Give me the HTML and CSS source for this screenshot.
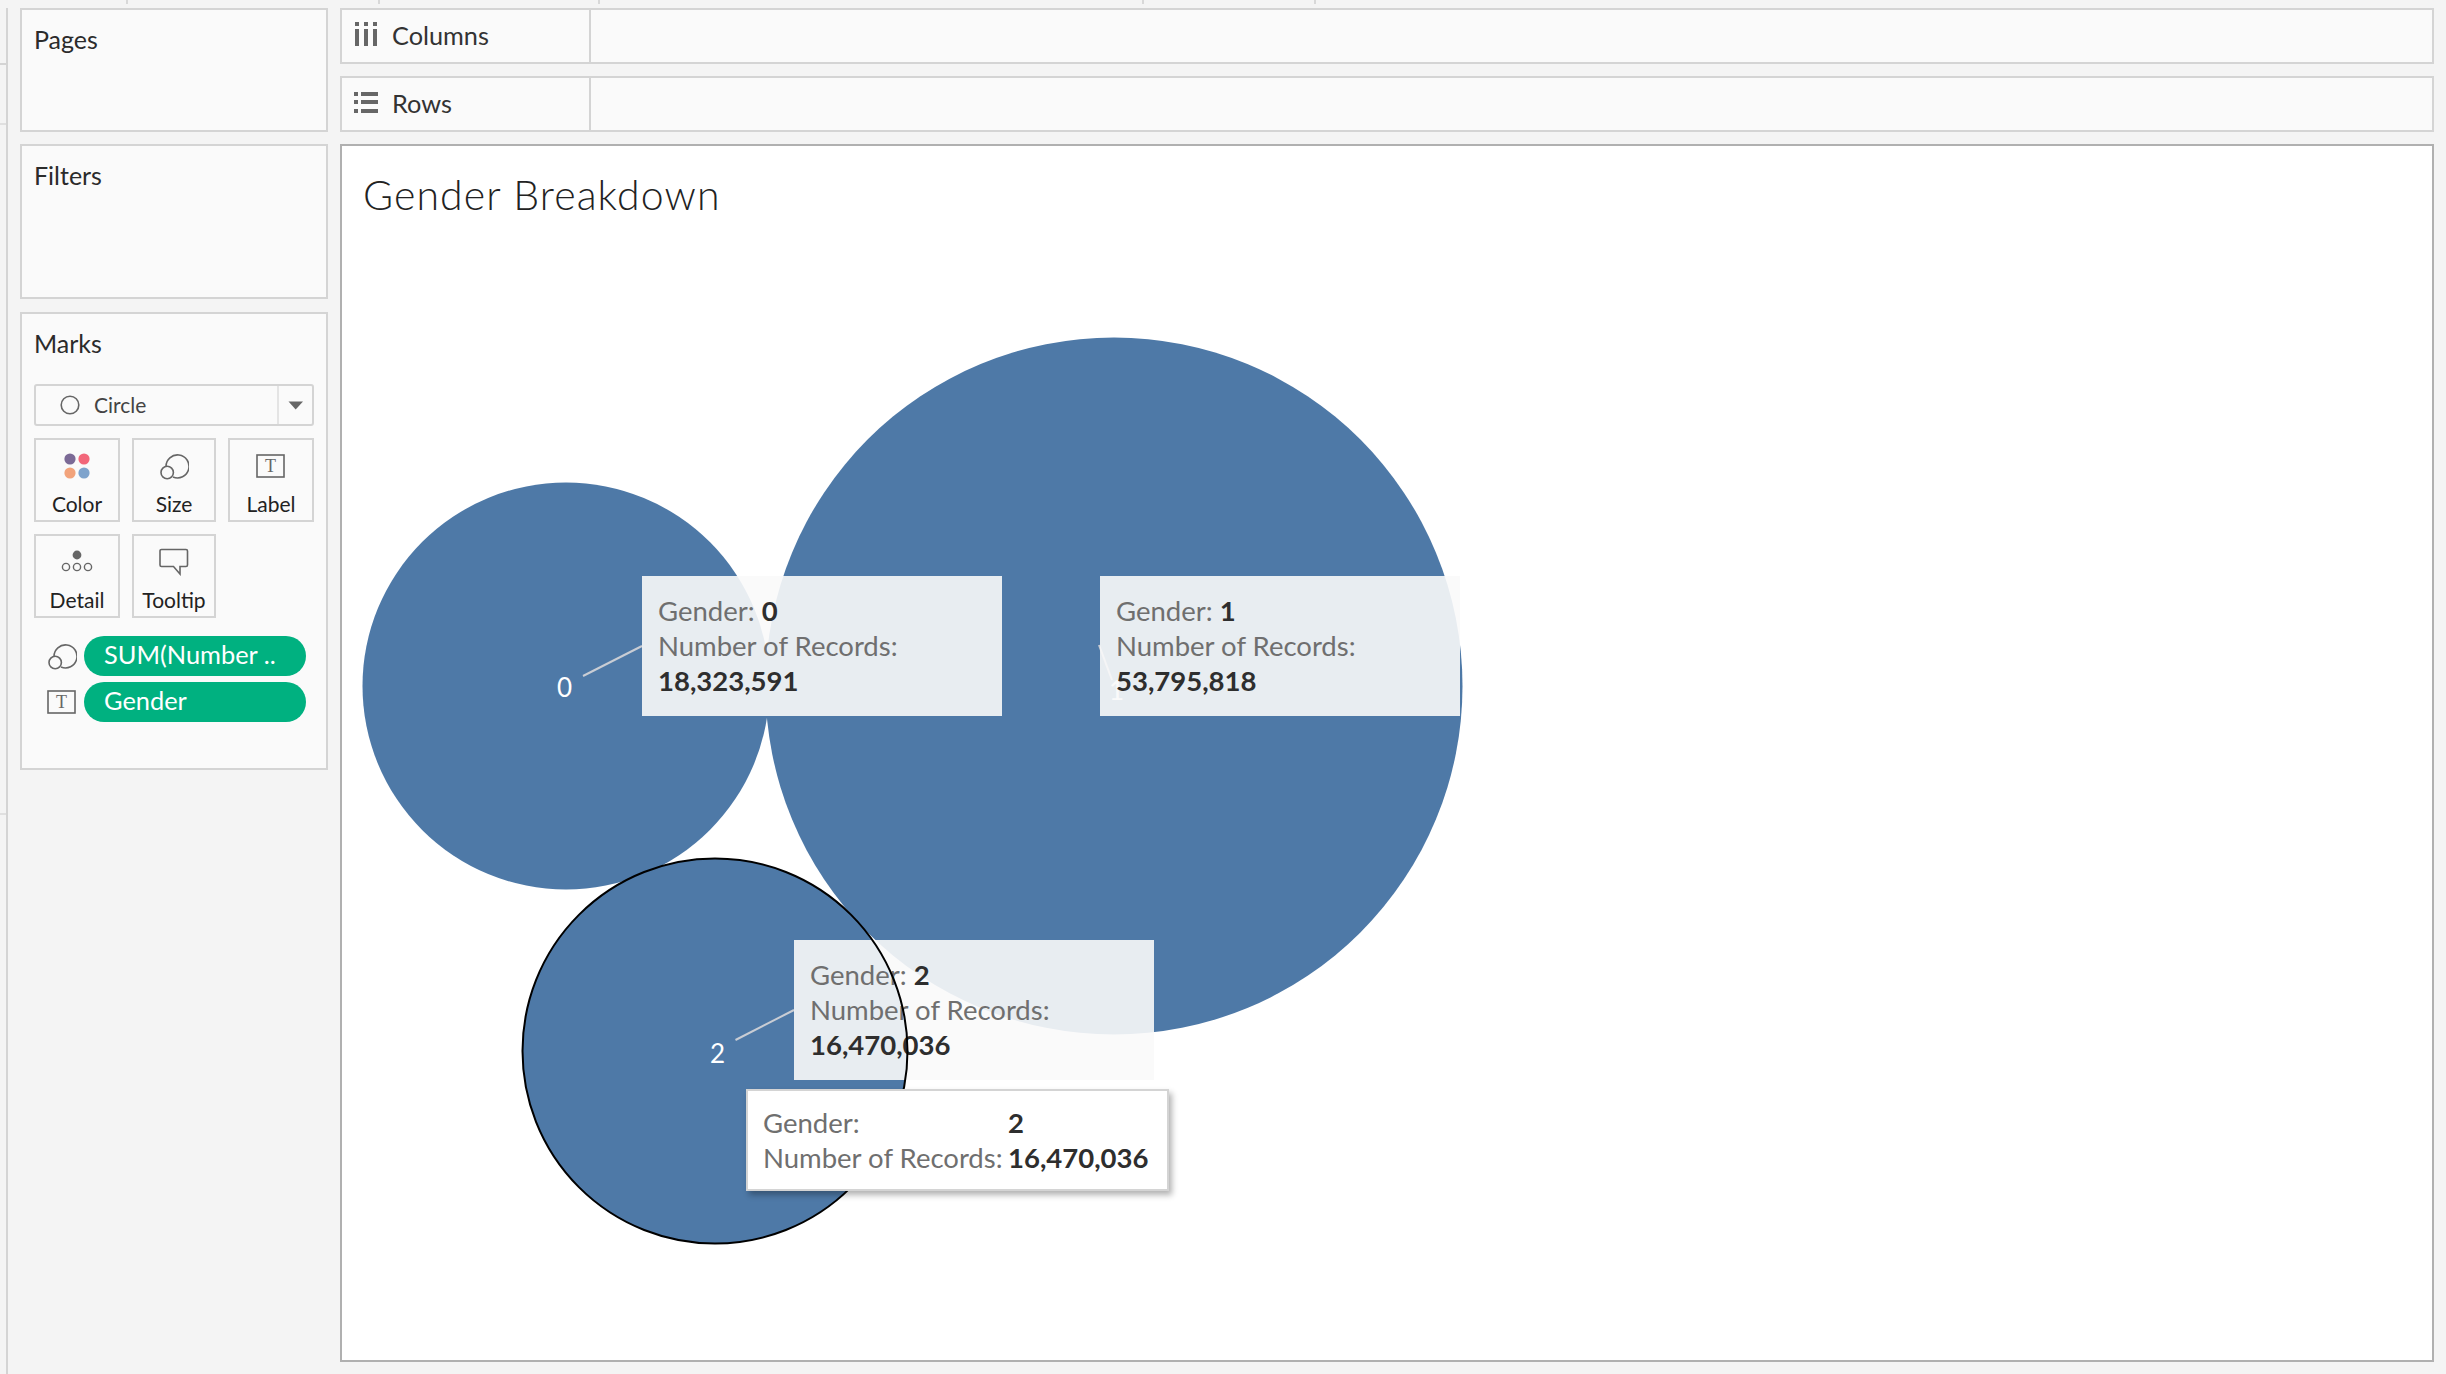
FILE: index.html
```html
<!DOCTYPE html>
<html lang="en">
<head>
<meta charset="utf-8">
<title>Gender Breakdown</title>
<link rel="stylesheet" href="styles.css">
</head>
<body>
<div class="ticks">
  <span class="tick t1"></span><span class="tick t2"></span><span class="tick t3"></span><span class="tick t4"></span><span class="tick t5"></span>
</div>
<div class="app">
  <div class="rail"><div class="rail-cell c1"></div><div class="rail-cell c2"></div><div class="rail-cell c3"></div></div>
  <aside class="sidebar">
    <section class="panel pages"><h2 class="panel-title">Pages</h2></section>
    <section class="panel filters"><h2 class="panel-title">Filters</h2></section>
    <section class="panel marks">
      <h2 class="panel-title">Marks</h2>
      <div class="select">
        <span class="select-main">
          <svg class="select-icon" width="20" height="20" viewBox="0 0 20 20"><circle cx="10" cy="10" r="8.8" fill="none" stroke="#666" stroke-width="1.6"/></svg>
          <span class="select-text">Circle</span>
        </span>
        <span class="select-arrow"><svg width="16" height="9" viewBox="0 0 16 9"><path d="M0.5 0.5H15L7.7 8.5Z" fill="#666"/></svg></span>
      </div>
      <div class="cards">
        <div class="card w1">
          <svg width="28" height="28" viewBox="0 0 28 28"><circle cx="7" cy="7" r="5.6" fill="#7b6a96"/><circle cx="21" cy="7" r="5.6" fill="#f2677a"/><circle cx="7" cy="21" r="5.6" fill="#f2a37b"/><circle cx="21" cy="21" r="5.6" fill="#7ea3cc"/></svg>
          <span>Color</span>
        </div>
        <div class="card w2">
          <svg width="30" height="28" viewBox="0 0 30 28"><path d="M7 14.5A11.5 11.5 0 1 1 14 25" fill="none" stroke="#666" stroke-width="1.6"/><circle cx="8.2" cy="20.5" r="6.2" fill="none" stroke="#666" stroke-width="1.6"/></svg>
          <span>Size</span>
        </div>
        <div class="card w3">
          <svg width="30" height="26" viewBox="0 0 30 26"><rect x="1" y="2" width="27" height="22" fill="none" stroke="#666" stroke-width="1.6"/><text x="14.5" y="19" class="icon-t">T</text></svg>
          <span>Label</span>
        </div>
        <div class="card w1">
          <svg width="32" height="24" viewBox="0 0 32 24"><circle cx="16" cy="5" r="4.4" fill="#666"/><circle cx="5" cy="17" r="3.6" fill="none" stroke="#666" stroke-width="1.4"/><circle cx="16" cy="17" r="3.6" fill="none" stroke="#666" stroke-width="1.4"/><circle cx="27" cy="17" r="3.6" fill="none" stroke="#666" stroke-width="1.4"/></svg>
          <span>Detail</span>
        </div>
        <div class="card w2">
          <svg width="30" height="28" viewBox="0 0 30 28"><path d="M2.5 1.5H27A1.5 1.5 0 0 1 28.5 3V17A1.5 1.5 0 0 1 27 18.5H21V26L14.5 18.5H2.5A1.5 1.5 0 0 1 1 17V3A1.5 1.5 0 0 1 2.5 1.5Z" fill="none" stroke="#666" stroke-width="1.6"/></svg>
          <span>Tooltip</span>
        </div>
      </div>
      <div class="pill-row">
        <svg class="pill-icon" width="30" height="28" viewBox="0 0 30 28"><path d="M7 14.5A11.5 11.5 0 1 1 14 25" fill="none" stroke="#666" stroke-width="1.6"/><circle cx="8.2" cy="20.5" r="6.2" fill="none" stroke="#666" stroke-width="1.6"/></svg>
        <span class="pill">SUM(Number ..</span>
      </div>
      <div class="pill-row">
        <svg class="pill-icon" width="30" height="26" viewBox="0 0 30 26"><rect x="1" y="2" width="27" height="22" fill="none" stroke="#666" stroke-width="1.6"/><text x="14.5" y="19" class="icon-t">T</text></svg>
        <span class="pill">Gender</span>
      </div>
    </section>
  </aside>
  <main class="main">
    <div class="shelf columns">
      <div class="shelf-head">
        <span class="shelf-icon"><svg width="22" height="24" viewBox="0 0 22 24"><g fill="#666"><rect x="0" y="0" width="4" height="4"/><rect x="9" y="0" width="4" height="4"/><rect x="18" y="0" width="4" height="4"/><rect x="0" y="7" width="4" height="17"/><rect x="9" y="7" width="4" height="17"/><rect x="18" y="7" width="4" height="17"/></g></svg></span>
        <span>Columns</span>
      </div>
    </div>
    <div class="shelf rows">
      <div class="shelf-head">
        <span class="shelf-icon"><svg width="24" height="21" viewBox="0 0 24 21"><g fill="#666"><rect x="0" y="0" width="4" height="4"/><rect x="7" y="0" width="17" height="4"/><rect x="0" y="8" width="4" height="4"/><rect x="7" y="8" width="17" height="4"/><rect x="0" y="17" width="4" height="4"/><rect x="7" y="17" width="17" height="4"/></g></svg></span>
        <span>Rows</span>
      </div>
    </div>
    <div class="viz">
      <h1 class="viz-title">Gender Breakdown</h1>
      <div class="canvas">
        <svg class="layer" width="2090" height="1214" viewBox="342 146 2090 1214">
          <circle cx="566" cy="686" r="203.5" fill="#4e79a7"/>
          <circle cx="1114" cy="686" r="348.5" fill="#4e79a7"/>
          <circle cx="715" cy="1051" r="192.5" fill="#4e79a7"/>
          <line x1="583" y1="676" x2="642" y2="646" class="leader"/>
          <line x1="735.5" y1="1040" x2="794" y2="1010" class="leader"/>
          <line x1="1099" y1="645" x2="1112" y2="680" class="leader"/>
        </svg>
        <span class="mark-label ml0">0</span>
        <span class="mark-label ml1">1</span>
        <span class="mark-label ml2">2</span>
        <div class="note n0">
          <div><span class="k">Gender:</span> <b>0</b></div>
          <div class="k">Number of Records:</div>
          <div><b>18,323,591</b></div>
        </div>
        <div class="note n1">
          <div><span class="k">Gender:</span> <b>1</b></div>
          <div class="k">Number of Records:</div>
          <div><b>53,795,818</b></div>
        </div>
        <div class="note n2">
          <div><span class="k">Gender:</span> <b>2</b></div>
          <div class="k">Number of Records:</div>
          <div><b>16,470,036</b></div>
        </div>
        <svg class="layer" width="2090" height="1214" viewBox="342 146 2090 1214">
          <circle cx="715" cy="1051" r="192.5" fill="none" stroke="#000" stroke-width="2"/>
        </svg>
        <div class="tooltip">
          <span class="k">Gender:</span><b>2</b>
          <span class="k">Number of Records:</span><b>16,470,036</b>
        </div>
      </div>
    </div>
  </main>
</div>
</body>
</html>
```

FILE: styles.css
```css
* { box-sizing: border-box; }
html, body { margin: 0; height: 100%; }
body {
  width: 2446px;
  height: 1374px;
  overflow: hidden;
  background: #f4f4f4;
  color: #333;
  font-family: "Lato", "Open Sans", sans-serif;
}
.ticks { display: flex; height: 4px; }
.tick { display: block; height: 4px; border-right: 2px solid #d8d8d8; }
.t1 { width: 128px; }
.t2 { width: 252px; }
.t3 { width: 220px; }
.t4 { width: 544px; }
.t5 { width: 172px; }

.app { display: flex; height: 1354px; margin-top: 4px; }
.rail { width: 8px; height: 1366px; border-right: 2px solid #d4d4d4; display: flex; flex-direction: column; flex: none; }
.rail-cell { width: 6px; border-bottom: 2px solid #e0e0e0; }
.c1 { height: 57px; border-bottom-color: #d4d4d4; }
.c2 { height: 60px; }
.c3 { height: 690px; }

.sidebar { width: 308px; margin-left: 12px; margin-right: 12px; display: flex; flex-direction: column; gap: 12px; flex: none; }
.panel { background: #fafafa; border: 2px solid #d4d4d4; padding: 0 13px 0 12px; }
.pages { height: 124px; }
.filters { height: 155px; }
.marks { height: 458px; margin-top: 1px; padding-left: 13px; }
.panel-title { margin: 0; font-weight: 400; font-size: 25px; line-height: 30px; padding-top: 14px; color: #2b2b2b; }
.marks .panel-title { padding-top: 14px; padding-bottom: 2px; margin-left: -1px; }

.select { display: flex; height: 42px; margin: 24px -1px 0; border: 2px solid #d4d4d4; border-radius: 3px; font-size: 21px; color: #444; }
.select-main { flex: 1; display: flex; align-items: center; gap: 14px; padding-left: 24px; }
.select-text { margin-top: -2px; }
.select-arrow { width: 35px; border-left: 2px solid #e4e4e4; display: flex; align-items: center; justify-content: center; }

.cards { display: flex; flex-wrap: wrap; gap: 12px; margin: 12px -1px 0; width: 280px; }
.card { height: 84px; border: 2px solid #d4d4d4; display: flex; flex-direction: column; align-items: center; justify-content: flex-start; padding-top: 12px; font-size: 21px; color: #222; }
.card svg { height: 28px; flex: none; }
.card span { margin-top: 11px; line-height: 26px; }
.w1 { width: 86px; }
.w2 { width: 84px; }
.w3 { width: 86px; }
.icon-t { font-family: "Liberation Serif", serif; font-size: 18px; fill: #666; text-anchor: middle; }

.pill-row { display: flex; align-items: center; gap: 7px; margin-top: 6px; padding-left: 12px; height: 40px; }
.cards + .pill-row { margin-top: 18px; }
.pill-icon { flex: none; }
.pill { width: 222px; height: 40px; border-radius: 20px; background: #00b180; color: #fff; font-size: 25.4px; line-height: 37px; padding-left: 20px; white-space: nowrap; }

.main { flex: 1; display: flex; flex-direction: column; gap: 12px; margin-right: 12px; min-width: 0; }
.shelf { height: 56px; background: #fafafa; border: 2px solid #d4d4d4; flex: none; }
.shelf-head { width: 249px; height: 100%; border-right: 2px solid #d4d4d4; display: flex; align-items: center; padding-left: 12px; font-size: 25.3px; color: #333; }
.shelf-icon { width: 24px; display: flex; justify-content: center; margin-right: 14px; margin-bottom: 4px; }
.shelf-head span:last-child { margin-top: -2px; }

.viz { flex: 1; position: relative; background: #fff; border: 2px solid #b0b0b0; }
.viz-title { position: absolute; left: 21px; top: 24px; margin: 0; font-weight: 300; font-size: 41px; letter-spacing: 1.1px; line-height: 50px; color: #222; white-space: nowrap; z-index: 2; }
.canvas { position: absolute; inset: 0; }
.layer { position: absolute; left: 0; top: 0; pointer-events: none; }
.leader { stroke: #c9cdd4; stroke-width: 2; }

.mark-label { position: absolute; color: #fff; font-size: 26px; line-height: 30px; }
.ml0 { left: 215px; top: 526px; }
.ml1 { left: 767px; top: 529px; }
.ml2 { left: 368px; top: 892px; }

.note { position: absolute; width: 360px; height: 140px; padding: 17px 16px 0; background: rgba(250, 250, 250, 0.9); font-size: 27.5px; line-height: 35px; white-space: nowrap; }
.note b, .tooltip b { font-weight: 700; color: #2e2e2e; }
.k { color: #6f6f6f; font-weight: 400; }
.n0 { left: 300px; top: 430px; }
.n1 { left: 758px; top: 430px; }
.n2 { left: 452px; top: 794px; }

.tooltip { position: absolute; left: 404px; top: 943px; width: 423px; height: 102px; padding: 14px 0 0 15px; background: #fff; border: 2px solid #d4d4d4; box-shadow: 3px 4px 6px rgba(0, 0, 0, 0.3); font-size: 27.5px; line-height: 35px; display: grid; grid-template-columns: 245px auto; align-content: start; justify-content: start; white-space: nowrap; }
```
